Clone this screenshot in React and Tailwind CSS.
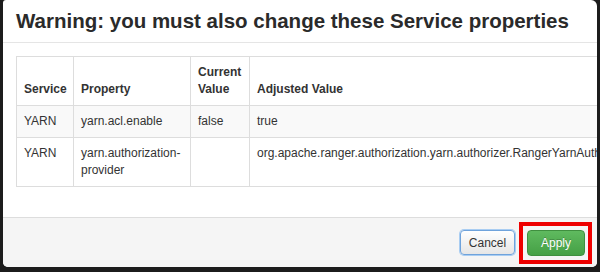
export default function App() {
  const font = { fontFamily: '"Liberation Sans", Arial, Helvetica, sans-serif' };
  return (
    <div className="w-[600px] h-[272px] bg-[#1c1c1c] overflow-hidden" style={font}>
      <div className="ml-[3px] w-[594px] h-[267px] bg-white rounded-tr-[6px] rounded-tl-[3px] rounded-b-[5px] overflow-hidden flex flex-col text-[#333]">
        <div className="h-[43px] shrink-0 border-b border-[#e5e5e5] flex items-center pl-[13px]">
          <h3 className="text-[20.5px] leading-[24px] font-bold text-[#2a2a2a] whitespace-nowrap">
            Warning: you must also change these Service properties
          </h3>
        </div>
        <div className="flex-1 pt-[13px] pl-[13px] overflow-hidden">
          <table className="table-fixed border-collapse w-[680px] text-[12px] leading-[17px] text-left">
            <colgroup>
              <col className="w-[57px]" />
              <col className="w-[117px]" />
              <col className="w-[59px]" />
              <col className="w-[447px]" />
            </colgroup>
            <thead>
              <tr>
                <th className="border border-[#dddddd] px-[7px] py-[7px] align-bottom font-bold">Service</th>
                <th className="border border-[#dddddd] px-[7px] py-[7px] align-bottom font-bold">Property</th>
                <th className="border border-[#dddddd] px-[7px] py-[7px] align-bottom font-bold">Current Value</th>
                <th className="border border-[#dddddd] px-[7px] py-[7px] align-bottom font-bold">Adjusted Value</th>
              </tr>
            </thead>
            <tbody>
              <tr className="bg-[#f9f9f9]">
                <td className="border border-[#dddddd] px-[7px] py-[7px] align-top">YARN</td>
                <td className="border border-[#dddddd] px-[7px] py-[7px] align-top">yarn.acl.enable</td>
                <td className="border border-[#dddddd] px-[7px] py-[7px] align-top">false</td>
                <td className="border border-[#dddddd] px-[7px] py-[7px] align-top">true</td>
              </tr>
              <tr>
                <td className="border border-[#dddddd] px-[7px] py-[7px] align-top">YARN</td>
                <td className="border border-[#dddddd] px-[7px] py-[7px] align-top">yarn.authorization-provider</td>
                <td className="border border-[#dddddd] px-[7px] py-[7px] align-top"></td>
                <td className="border border-[#dddddd] px-[7px] py-[7px] align-top whitespace-nowrap">org.apache.ranger.authorization.yarn.authorizer.RangerYarnAuthorizer</td>
              </tr>
            </tbody>
          </table>
        </div>
        <div className="h-[50px] shrink-0 border-t border-[#dddddd] bg-[#f5f5f5] flex items-center justify-end pr-[5px]">
          <button className="h-[25px] w-[55px] mr-[4px] rounded-[4px] border border-[#6fa3dc] shadow-[0_0_0_1px_#a9cdf2] bg-gradient-to-b from-white to-[#e6e6e6] text-[12px] text-[#333]">
            Cancel
          </button>
          <div className="border-[4px] border-[#ee0000] p-[4px] pr-[3px]">
            <button className="h-[26px] w-[58px] rounded-[4px] border border-[#3f8f3f] bg-gradient-to-b from-[#5fba5f] to-[#45a045] text-[12px] text-white [text-shadow:0_-1px_0_rgba(0,0,0,0.25)]">
              Apply
            </button>
          </div>
        </div>
      </div>
    </div>
  );
}
